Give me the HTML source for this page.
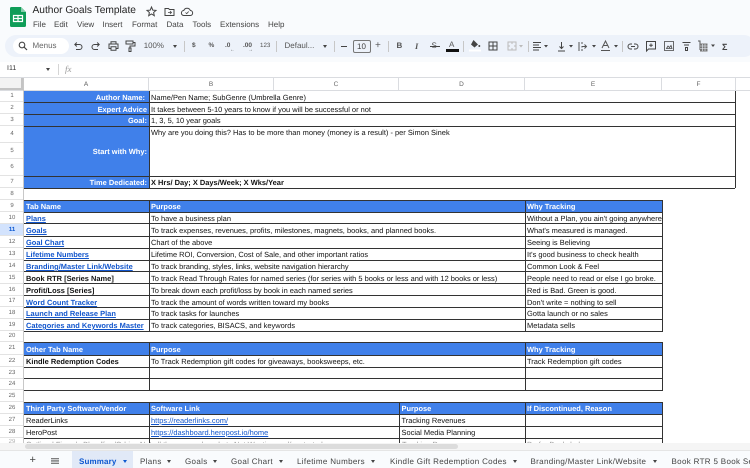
<!DOCTYPE html>
<html><head><meta charset="utf-8">
<style>
html,body{margin:0;padding:0;width:750px;height:468px;overflow:hidden;background:#fff}
body{font-family:"Liberation Sans",sans-serif;position:relative;filter:blur(.35px);text-rendering:geometricPrecision}
div,span{position:absolute;white-space:nowrap;box-sizing:border-box}
.m{font-size:8px;color:#444;top:18.5px;line-height:11px}
.t{font-size:8px;color:#555;line-height:10px;top:41px}
.ch{top:78px;height:13px;font-size:6.5px;color:#666;text-align:center;line-height:13px;border-right:1px solid #dadce0}
.rn{left:0;width:24px;font-size:6px;color:#666;text-align:center;background:#fff;border-bottom:1px solid #e3e3e3}
.c{font-size:7.46px;color:#111;line-height:11px}
.w{color:#fff;font-weight:bold}
.bd{font-weight:bold}
.a{color:#1155cc;text-decoration:underline}
.ab{color:#1155cc;text-decoration:underline;font-weight:bold}
.h{height:1.2px;background:#333}
.v{width:1.3px;background:#333}
.tab{top:456px;font-size:8px;color:#444;line-height:11px;letter-spacing:.33px}
.ar{width:0;height:0;border-left:2.5px solid transparent;border-right:2.5px solid transparent;border-top:3px solid #444;top:460px}
svg{position:absolute;overflow:visible}
</style></head><body>
<div style="left:0;top:0;width:750px;height:62px;background:#f9fbfd"></div>
<div style="left:5px;top:35px;width:750px;height:22px;border-radius:11px;background:#edf2fa"></div>

<svg style="left:10px;top:7px" width="16" height="20" viewBox="0 0 16 20"><path d="M1.5 0H11L16 5V18.5A1.5 1.5 0 0 1 14.5 20H1.5A1.5 1.5 0 0 1 0 18.5V1.5A1.5 1.5 0 0 1 1.5 0Z" fill="#0f9d58"/><path d="M11 0V5H16Z" fill="#87ceac"/><path d="M3.5 8.5H12.5V14.5H3.5ZM3.5 11.5H12.5M8 8.5V14.5" fill="none" stroke="#fff" stroke-width="1.2"/></svg>
<div style="left:32.5px;top:3px;font-size:10.2px;line-height:15px;color:#222">Author Goals Template</div>
<svg style="left:146px;top:6px" width="11" height="11" viewBox="0 0 11 11"><path d="M5.5 1L6.8 4.1L10 4.4L7.6 6.5L8.3 9.7L5.5 8L2.7 9.7L3.4 6.5L1 4.4L4.2 4.1Z" fill="none" stroke="#444" stroke-width="1"/></svg>
<svg style="left:164px;top:6px" width="11" height="11" viewBox="0 0 11 11"><path d="M1 2.5H4.5L5.5 3.5H10V9.5H1Z" fill="none" stroke="#444"/><path d="M4 6.5H7.5M6 5L7.5 6.5L6 8" fill="none" stroke="#444" stroke-width=".8"/></svg>
<svg style="left:181px;top:6px" width="12" height="11" viewBox="0 0 12 11"><path d="M3 9.5A2.5 2.5 0 0 1 2.8 4.5A3.5 3.5 0 0 1 9.3 4.5A2.5 2.5 0 0 1 9 9.5Z" fill="none" stroke="#444"/><path d="M4.5 6.5L5.7 7.7L7.7 5.5" fill="none" stroke="#444" stroke-width=".8"/></svg>
<div class="m" style="left:33px">File</div><div class="m" style="left:54px">Edit</div><div class="m" style="left:77px">View</div><div class="m" style="left:102.5px">Insert</div><div class="m" style="left:132px">Format</div><div class="m" style="left:166.5px">Data</div><div class="m" style="left:192.5px">Tools</div><div class="m" style="left:220px">Extensions</div><div class="m" style="left:268px">Help</div>

<div style="left:13px;top:38px;width:56px;height:16px;border-radius:8px;background:#fff"></div>
<svg style="left:18px;top:41px" width="10" height="10" viewBox="0 0 10 10"><circle cx="4" cy="4" r="2.8" fill="none" stroke="#444" stroke-width="1.1"/><path d="M6 6L9 9" stroke="#444" stroke-width="1.2"/></svg>
<div class="t" style="left:32.5px;color:#666">Menus</div>
<svg style="left:73px;top:41px" width="10" height="10" viewBox="0 0 10 10"><path d="M2 3.5H6.5A2.3 2.3 0 0 1 6.5 8.5H3M3.8 1.5L1.8 3.5L3.8 5.5" fill="none" stroke="#444" stroke-width="1"/></svg>
<svg style="left:91px;top:41px" width="10" height="10" viewBox="0 0 10 10"><path d="M8 3.5H3.5A2.3 2.3 0 0 0 3.5 8.5H7M6.2 1.5L8.2 3.5L6.2 5.5" fill="none" stroke="#444" stroke-width="1"/></svg>
<svg style="left:108px;top:41px" width="11" height="10" viewBox="0 0 11 10"><path d="M3 3V.8H8V3M3 7.5H1V3H10V7.5H8M3 5.8H8V9.3H3Z" fill="none" stroke="#444" stroke-width="1"/></svg>
<svg style="left:125px;top:40px" width="11" height="12" viewBox="0 0 11 12"><path d="M1 1H8V4H1ZM8 2.5H10V6H5V8M4 8H6V11.5H4Z" fill="none" stroke="#444" stroke-width="1"/></svg>
<div class="t" style="left:143.7px;font-size:7.9px">100%</div>
<div class="ar" style="left:172.5px;top:45px"></div>
<div style="left:183.5px;top:41px;width:1px;height:11px;background:#c7c7c7"></div>
<div class="t" style="left:192px;font-weight:bold;font-size:6.5px">$</div>
<div class="t" style="left:208.5px;font-size:6.5px;font-weight:bold">%</div>
<div class="t" style="left:225px;font-size:6.5px;font-weight:bold">.0<span style="left:5px;top:4px;font-size:5px">←</span></div>
<div class="t" style="left:243px;font-size:6.5px;font-weight:bold">.00<span style="left:5px;top:4px;font-size:5px">→</span></div>
<div class="t" style="left:260px;font-size:6.2px">123</div>
<div style="left:276px;top:41px;width:1px;height:11px;background:#c7c7c7"></div>
<div class="t" style="left:284.5px">Defaul...</div>
<div class="ar" style="left:322.5px;top:45px"></div>
<div style="left:334px;top:41px;width:1px;height:11px;background:#c7c7c7"></div>
<div style="left:341px;top:46px;width:6px;height:1px;background:#444"></div>
<div style="left:352.5px;top:40px;width:18px;height:13px;border:1px solid #777;border-radius:2px;font-size:8px;color:#444;text-align:center;line-height:11px">10</div>
<div class="t" style="left:375px;font-size:10px;top:41px">+</div>
<div style="left:388px;top:41px;width:1px;height:11px;background:#c7c7c7"></div>
<div class="t" style="left:396.5px;font-weight:bold;font-size:8px">B</div>
<div class="t" style="left:415px;font-style:italic;font-size:8.5px;font-family:'Liberation Serif',serif;font-weight:bold">I</div>
<div class="t" style="left:431.5px;font-size:8px">S</div><div style="left:429.5px;top:46px;width:10px;height:1px;background:#444"></div>
<div class="t" style="left:449px;font-size:8px;top:40px">A</div><div style="left:446px;top:49px;width:13px;height:2.5px;background:#111"></div>
<div style="left:463px;top:41px;width:1px;height:11px;background:#c7c7c7"></div>
<svg style="left:469px;top:39px" width="12" height="13" viewBox="0 0 12 13"><path d="M4.5 1L9 5.5L5.5 8.5L2 5.5Z" fill="#444"/><circle cx="10.3" cy="7" r="1" fill="#444"/><rect x="0" y="10.5" width="12" height="2" fill="#fff"/></svg>
<svg style="left:488px;top:41px" width="10" height="10" viewBox="0 0 10 10"><path d="M1 1H9V9H1ZM1 5H9M5 1V9" fill="none" stroke="#444" stroke-width="1"/></svg>
<svg style="left:507px;top:41px" width="16" height="10" viewBox="0 0 16 10"><path d="M1 1H9V9H1ZM1 5H3M7 5H9M5 1V3M5 7V9" fill="none" stroke="#bbb" stroke-width="1"/><path d="M12 4H16L14 6.5Z" fill="#bbb"/></svg>
<div style="left:528px;top:41px;width:1px;height:11px;background:#c7c7c7"></div>
<svg style="left:533px;top:42px" width="17" height="9" viewBox="0 0 17 9"><path d="M0 .5H8M0 3H6M0 5.5H8M0 8H6" stroke="#444" stroke-width="1"/><path d="M11 3H15L13 5.5Z" fill="#444"/></svg>
<svg style="left:557px;top:41px" width="17" height="11" viewBox="0 0 17 11"><path d="M1 10H8M4.5 1V7.5M2.5 5.5L4.5 7.5L6.5 5.5" fill="none" stroke="#444" stroke-width="1"/><path d="M12 4H16L14 6.5Z" fill="#444"/></svg>
<svg style="left:578px;top:41px" width="19" height="11" viewBox="0 0 19 11"><path d="M1 1V10M4 1V3M4 5V6.5M4 8V10M4 5.5H8M6.5 3.5L8.5 5.5L6.5 7.5" fill="none" stroke="#555" stroke-width="1"/><path d="M14 4H18L16 6.5Z" fill="#444"/></svg>
<svg style="left:601px;top:40px" width="19" height="12" viewBox="0 0 19 12"><path d="M1 8L4.5 1L8 8M2.5 5.5H6.5M0 10.5H9" fill="none" stroke="#555" stroke-width="1"/><path d="M13 5H17L15 7.5Z" fill="#444"/></svg>
<div style="left:622px;top:41px;width:1px;height:11px;background:#c7c7c7"></div>
<svg style="left:628px;top:43px" width="10" height="7" viewBox="0 0 10 7"><path d="M4 1H2.5A2.3 2.3 0 0 0 2.5 6H4M6 1H7.5A2.3 2.3 0 0 1 7.5 6H6M3 3.5H7" fill="none" stroke="#444" stroke-width="1"/></svg>
<svg style="left:646px;top:41px" width="10" height="11" viewBox="0 0 10 11"><path d="M.5.5H9.5V8H2.5L.5 10ZM5 2.5V6M3.2 4.2H6.8" fill="none" stroke="#444" stroke-width="1"/></svg>
<svg style="left:664px;top:41px" width="10" height="10" viewBox="0 0 10 10"><path d="M.5.5H9.5V9.5H.5ZM2.5 7.5L4 5L5.5 6.5L7 4.5L8 7.5Z" fill="none" stroke="#444" stroke-width=".8"/></svg>
<svg style="left:682px;top:42px" width="9" height="9" viewBox="0 0 9 9"><path d="M.5.5H8.5M2 3H7M3.5 5.5H5.5V8.5H3.5Z" fill="none" stroke="#444" stroke-width="1"/></svg>
<svg style="left:697px;top:40px" width="18" height="12" viewBox="0 0 18 12"><path d="M1 1H3V10" fill="none" stroke="#555"/><rect x="3" y="3.5" width="7.5" height="8" fill="#777"/><path d="M3 6H10.5M3 8.5H10.5M5.5 4V11M8 4V11" stroke="#edf2fa" stroke-width=".6"/><path d="M14 4.5H18L16 7Z" fill="#444"/></svg>
<div class="t" style="left:722px;font-size:9px;font-weight:bold;top:41.5px;color:#444">Σ</div>

<div style="left:0;top:62px;width:750px;height:15px;background:#fff"></div>
<div style="left:7px;top:64px;font-size:7px;line-height:10px;color:#333">I11</div>
<div class="ar" style="left:46px;top:68px"></div>
<div style="left:57.5px;top:64px;width:1px;height:11px;background:#d5d5d5"></div>
<div style="left:65px;top:63px;font-size:9px;font-style:italic;color:#999;font-family:'Liberation Serif',serif;line-height:12px">fx</div>

<div style="left:0;top:77px;width:750px;height:1px;background:#dadce0"></div>
<div style="left:0;top:78px;width:24px;height:13px;background:#f3f3f3;border-right:3px solid #c4c4c4;border-bottom:3px solid #c4c4c4"></div>
<div class="ch" style="left:24px;width:125px">A</div><div class="ch" style="left:149px;width:125px">B</div><div class="ch" style="left:274px;width:125px">C</div><div class="ch" style="left:399px;width:126px">D</div><div class="ch" style="left:525px;width:137px">E</div><div class="ch" style="left:662px;width:74px">F</div>
<div style="left:0;top:90px;width:750px;height:1px;background:#dadce0"></div>

<div class="rn" style="top:91px;height:11px;line-height:11px">1</div>
<div class="rn" style="top:102px;height:12px;line-height:12px">2</div>
<div class="rn" style="top:114px;height:12px;line-height:12px">3</div>
<div class="rn" style="top:126px;height:17px;line-height:17px">4</div>
<div class="rn" style="top:143px;height:16px;line-height:16px">5</div>
<div class="rn" style="top:159px;height:17px;line-height:17px">6</div>
<div class="rn" style="top:176px;height:12px;line-height:12px">7</div>
<div class="rn" style="top:188px;height:12px;line-height:12px">8</div>
<div class="rn" style="top:200px;height:12px;line-height:12px">9</div>
<div class="rn" style="top:212px;height:12px;line-height:12px">10</div>
<div class="rn" style="top:224px;height:12px;line-height:12px;background:#d3e3fd;color:#0b57d0;font-weight:bold">11</div>
<div class="rn" style="top:236px;height:12px;line-height:12px">12</div>
<div class="rn" style="top:248px;height:12px;line-height:12px">13</div>
<div class="rn" style="top:260px;height:12px;line-height:12px">14</div>
<div class="rn" style="top:272px;height:12px;line-height:12px">15</div>
<div class="rn" style="top:284px;height:12px;line-height:12px">16</div>
<div class="rn" style="top:296px;height:11px;line-height:11px">17</div>
<div class="rn" style="top:307px;height:12px;line-height:12px">18</div>
<div class="rn" style="top:319px;height:12px;line-height:12px">19</div>
<div class="rn" style="top:331px;height:11px;line-height:11px">20</div>
<div class="rn" style="top:342px;height:13px;line-height:13px">21</div>
<div class="rn" style="top:355px;height:12px;line-height:12px">22</div>
<div class="rn" style="top:367px;height:12px;line-height:12px">23</div>
<div class="rn" style="top:379px;height:11px;line-height:11px">24</div>
<div class="rn" style="top:390px;height:12px;line-height:12px">25</div>
<div class="rn" style="top:402px;height:12px;line-height:12px">26</div>
<div class="rn" style="top:414px;height:12px;line-height:12px">27</div>
<div class="rn" style="top:426px;height:12px;line-height:12px">28</div>
<div class="rn" style="top:438px;height:5px;line-height:9px;border:0;overflow:hidden;opacity:.5">29</div>
<div style="left:23px;top:78px;width:1px;height:365px;background:#c8c8c8"></div>

<div style="left:24px;top:91px;width:125px;height:97px;background:#4080ea"></div>
<div style="left:24px;top:200px;width:638px;height:12px;background:#4080ea"></div>
<div style="left:24px;top:343px;width:638px;height:12px;background:#4080ea"></div>
<div style="left:24px;top:402px;width:638px;height:12px;background:#4080ea"></div>

<div class="h" style="left:24px;top:102px;width:711px"></div><div class="h" style="left:24px;top:114px;width:711px"></div><div class="h" style="left:24px;top:126px;width:711px"></div><div class="h" style="left:24px;top:176px;width:711px"></div><div class="h" style="left:24px;top:188px;width:711px"></div>
<div class="v" style="left:149px;top:91px;height:97px"></div><div class="v" style="left:735px;top:91px;height:97px"></div>

<div class="h" style="left:24px;top:200px;width:638px"></div><div class="h" style="left:24px;top:212px;width:638px"></div><div class="h" style="left:24px;top:223px;width:638px"></div><div class="h" style="left:24px;top:236px;width:638px"></div><div class="h" style="left:24px;top:248px;width:638px"></div><div class="h" style="left:24px;top:260px;width:638px"></div><div class="h" style="left:24px;top:271px;width:638px"></div><div class="h" style="left:24px;top:283px;width:638px"></div><div class="h" style="left:24px;top:295px;width:638px"></div><div class="h" style="left:24px;top:307px;width:638px"></div><div class="h" style="left:24px;top:319px;width:638px"></div><div class="h" style="left:24px;top:331px;width:638px"></div>
<div class="v" style="left:149px;top:200px;height:131px"></div><div class="v" style="left:525px;top:200px;height:131px"></div><div class="v" style="left:662px;top:200px;height:132px"></div>

<div class="h" style="left:24px;top:342px;width:638px"></div><div class="h" style="left:24px;top:355px;width:638px"></div><div class="h" style="left:24px;top:367px;width:638px"></div><div class="h" style="left:24px;top:378px;width:638px"></div><div class="h" style="left:24px;top:390px;width:638px"></div>
<div class="v" style="left:149px;top:342px;height:48px"></div><div class="v" style="left:525px;top:342px;height:48px"></div><div class="v" style="left:662px;top:342px;height:49px"></div>

<div class="h" style="left:24px;top:402px;width:638px"></div><div class="h" style="left:24px;top:414px;width:638px"></div><div class="h" style="left:24px;top:426px;width:638px"></div><div class="h" style="left:24px;top:438px;width:638px"></div>
<div class="v" style="left:149px;top:402px;height:41px"></div><div class="v" style="left:399px;top:402px;height:41px"></div><div class="v" style="left:525px;top:402px;height:41px"></div><div class="v" style="left:662px;top:402px;height:41px"></div>

<div class="c w" style="right:605px;top:92px">Author Name:</div>
<div class="c w" style="right:603px;top:104px">Expert Advice</div>
<div class="c w" style="right:603px;top:115px">Goal:</div>
<div class="c w" style="right:603px;top:146px">Start with Why:</div>
<div class="c w" style="right:603px;top:177px">Time Dedicated:</div>
<div class="c" style="left:151px;top:92px">Name/Pen Name; SubGenre (Umbrella Genre)</div>
<div class="c" style="left:151px;top:104px">It takes between 5-10 years to know if you will be successful or not</div>
<div class="c" style="left:151px;top:115px">1, 3, 5, 10 year goals</div>
<div class="c" style="left:151px;top:127px">Why are you doing this? Has to be more than money (money is a result) - per Simon Sinek</div>
<div class="c bd" style="left:151px;top:177px">X Hrs/ Day; X Days/Week; X Wks/Year</div>

<div class="c w" style="left:26px;top:201px">Tab Name</div><div class="c w" style="left:151px;top:201px">Purpose</div><div class="c w" style="left:527px;top:201px">Why Tracking</div>
<div class="c ab" style="left:26px;top:213px">Plans</div><div class="c" style="left:151px;top:213px">To have a business plan</div><div class="c" style="left:527px;top:213px;width:135px;overflow:hidden">Without a Plan, you ain't going anywhere</div>
<div class="c ab" style="left:26px;top:225px">Goals</div><div class="c" style="left:151px;top:225px">To track expenses, revenues, profits, milestones, magnets, books, and planned books.</div><div class="c" style="left:527px;top:225px">What's measured is managed.</div>
<div class="c ab" style="left:26px;top:237px">Goal Chart</div><div class="c" style="left:151px;top:237px">Chart of the above</div><div class="c" style="left:527px;top:237px">Seeing is Believing</div>
<div class="c ab" style="left:26px;top:249px">Lifetime Numbers</div><div class="c" style="left:151px;top:249px">Lifetime ROI, Conversion, Cost of Sale, and other important ratios</div><div class="c" style="left:527px;top:249px">It's good business to check health</div>
<div class="c ab" style="left:26px;top:261px">Branding/Master Link/Website</div><div class="c" style="left:151px;top:261px">To track branding, styles, links, website navigation hierarchy</div><div class="c" style="left:527px;top:261px">Common Look &amp; Feel</div>
<div class="c bd" style="left:26px;top:273px">Book RTR [Series Name]</div><div class="c" style="left:151px;top:273px">To track Read Through Rates for named series (for series with 5 books or less and with 12 books or less)</div><div class="c" style="left:527px;top:273px">People need to read or else I go broke.</div>
<div class="c bd" style="left:26px;top:285px">Profit/Loss [Series]</div><div class="c" style="left:151px;top:285px">To break down each profit/loss by book in each named series</div><div class="c" style="left:527px;top:285px">Red is Bad. Green is good.</div>
<div class="c ab" style="left:26px;top:297px">Word Count Tracker</div><div class="c" style="left:151px;top:297px">To track the amount of words written toward my books</div><div class="c" style="left:527px;top:297px">Don't write = nothing to sell</div>
<div class="c ab" style="left:26px;top:308px">Launch and Release Plan</div><div class="c" style="left:151px;top:308px">To track tasks for launches</div><div class="c" style="left:527px;top:308px">Gotta launch or no sales</div>
<div class="c ab" style="left:26px;top:320px">Categories and Keywords Master</div><div class="c" style="left:151px;top:320px">To track categories, BISACS, and keywords</div><div class="c" style="left:527px;top:320px">Metadata sells</div>

<div class="c w" style="left:26px;top:344px">Other Tab Name</div><div class="c w" style="left:151px;top:344px">Purpose</div><div class="c w" style="left:527px;top:344px">Why Tracking</div>
<div class="c bd" style="left:26px;top:356px">Kindle Redemption Codes</div><div class="c" style="left:151px;top:356px">To Track Redemption gift codes for giveaways, booksweeps, etc.</div><div class="c" style="left:527px;top:356px">Track Redemption gift codes</div>

<div class="c w" style="left:26px;top:403px">Third Party Software/Vendor</div><div class="c w" style="left:151px;top:403px">Software Link</div><div class="c w" style="left:401.5px;top:403px">Purpose</div><div class="c w" style="left:527px;top:403px">If Discontinued, Reason</div>
<div class="c" style="left:26px;top:415px">ReaderLinks</div><div class="c a" style="left:151px;top:415px">https://readerlinks.com/</div><div class="c" style="left:401.5px;top:415px">Tracking Revenues</div>
<div class="c" style="left:26px;top:427px">HeroPost</div><div class="c a" style="left:151px;top:427px">https://dashboard.heropost.io/home</div><div class="c" style="left:401.5px;top:427px">Social Media Planning</div>

<div style="left:24px;top:439px;width:726px;height:4px;overflow:hidden;opacity:.45"><div class="c" style="left:2px;top:0">Outlined Fiverr/a Bloodline/Odrive Not all the way and markets Not Wanting and/or started</div><div class="c" style="left:378px;top:0">Tracking Revenue</div><div class="c" style="left:503px;top:0">Prefer Bookshelves</div></div>

<div style="left:0;top:443px;width:750px;height:7px;background:#f5f5f5"></div>
<div style="left:25px;top:444px;width:433px;height:5px;background:#dcdcdc;border-radius:3px"></div>
<div style="left:0;top:450px;width:750px;height:18px;background:#f9fbfd;border-top:1px solid #e5e5e5"></div>
<div style="left:72px;top:451px;width:61px;height:17px;background:#e1e9f7"></div>
<div style="left:29.5px;top:454px;font-size:11px;color:#444;line-height:13px">+</div>
<svg style="left:51px;top:458px" width="8" height="6" viewBox="0 0 8 6"><path d="M0 .5H8M0 2.2H8M0 3.9H8M0 5.6H8" stroke="#555" stroke-width=".8"/></svg>
<div class="tab" style="left:79px;color:#0b57d0;font-weight:bold;letter-spacing:.15px">Summary</div><div class="ar" style="left:123px;border-top-color:#0b57d0"></div>
<div class="tab" style="left:140px">Plans</div><div class="ar" style="left:167px"></div>
<div class="tab" style="left:185px">Goals</div><div class="ar" style="left:212.5px"></div>
<div class="tab" style="left:231px">Goal Chart</div><div class="ar" style="left:279px"></div>
<div class="tab" style="left:297px">Lifetime Numbers</div><div class="ar" style="left:371px"></div>
<div class="tab" style="left:390px">Kindle Gift Redemption Codes</div><div class="ar" style="left:513px"></div>
<div class="tab" style="left:530.5px">Branding/Master Link/Website</div><div class="ar" style="left:653px"></div>
<div class="tab" style="left:671.5px">Book RTR 5 Book Series</div>
</body></html>
